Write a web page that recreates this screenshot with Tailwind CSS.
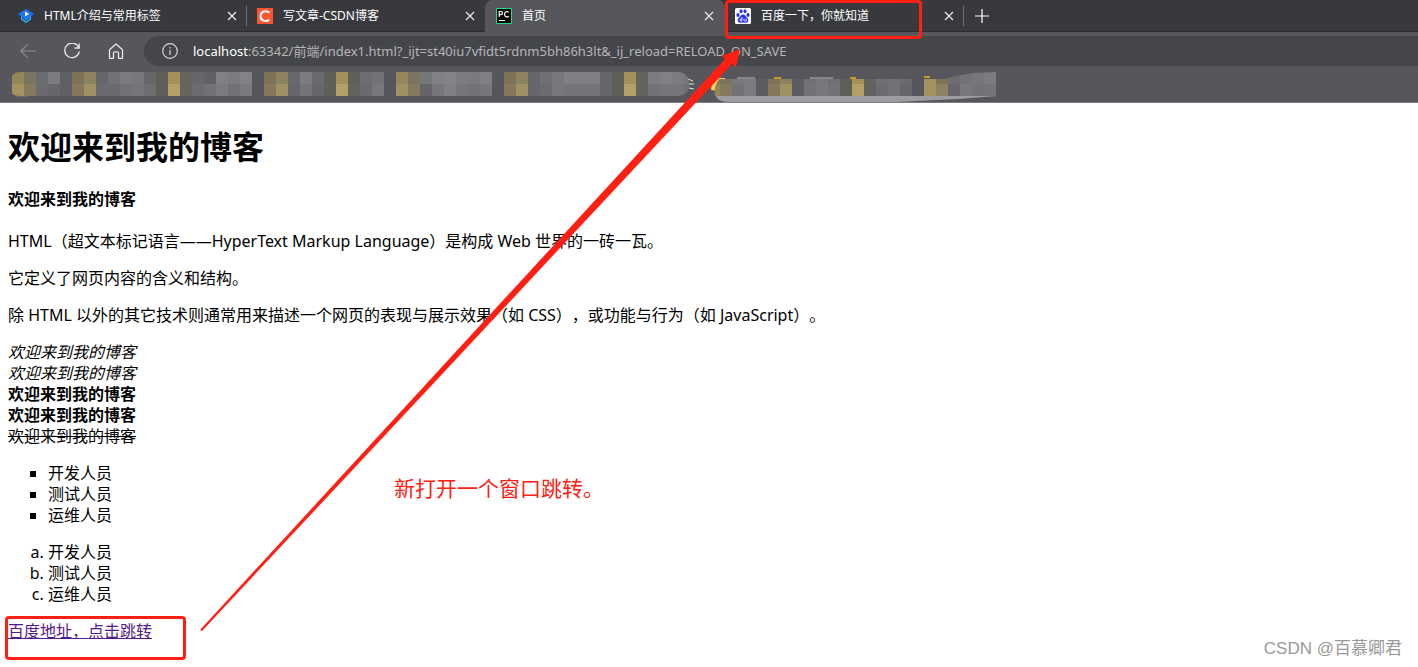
<!DOCTYPE html>
<html lang="zh-CN">
<head>
<meta charset="utf-8">
<title>首页</title>
<script src="https://cdn.jsdelivr.net/npm/@tailwindcss/browser@4"></script>
</head>
<body class="relative min-h-screen overflow-x-hidden bg-white font-['Noto_Sans','Noto_Sans_CJK_SC',sans-serif] text-base leading-[21px] text-black [text-spacing-trim:space-all]">
<header class="bg-[#56575c]">
  <nav aria-label="标签页" class="flex h-8 bg-[#38393d] text-xs text-white">
    <div class="flex w-[247px] items-center border-b border-[#2b2c2f] pr-2 pl-[18px]">
      <svg class="size-4 shrink-0" viewBox="0 0 16 16" aria-hidden="true"><path d="M3 8v3.500L8 15l5-3.500V8z" fill="#36b6ee"/><path d="M8 1l8 5-8 6-8-6z" fill="#1d72f3"/><path d="M7 3.500v5l4-2.500z" fill="#fff"/><path d="M4 10l4 3 4-3" fill="none" stroke="#1b3d61"/></svg>
      <span class="ml-2.5 grow whitespace-nowrap">HTML介绍与常用标签</span>
      <button aria-label="关闭" class="grid size-4 place-items-center"><svg class="size-2.5" viewBox="0 0 10 10"><path d="M1 1l8 8M9 1l-8 8" stroke="#e6e6e7" stroke-width="1.300"/></svg></button>
      <span class="ml-1.5 -mr-2 h-5 w-px bg-[#707175]"></span>
    </div>
    <div class="flex w-[238px] items-center border-b border-[#2b2c2f] pr-[7px] pl-2.5">
      <svg class="size-4 shrink-0" viewBox="0 0 16 16" aria-hidden="true"><path d="M0 0h16v16H0z" fill="#fc5531"/><path d="M12.500 4.500C8 1.500 3.500 4 3.500 8.200c0 4.500 4.800 6 8.700 3.600" fill="none" stroke="#fff" stroke-width="2"/></svg>
      <span class="ml-2.5 grow whitespace-nowrap">写文章-CSDN博客</span>
      <button aria-label="关闭" class="grid size-4 place-items-center"><svg class="size-2.5" viewBox="0 0 10 10"><path d="M1 1l8 8M9 1l-8 8" stroke="#e6e6e7" stroke-width="1.300"/></svg></button>
    </div>
    <div class="flex w-[240px] items-center rounded-t-lg bg-[#56575c] pr-2 pl-[11px]">
      <svg class="size-4 shrink-0" viewBox="0 0 16 16" aria-hidden="true"><path d="M.5.5h15v15H.5z" fill="#000" stroke="#21d789"/><path d="M3.200 9V3.500h1.600q1.700 0 1.700 1.600T4.800 6.700H3.200M12.700 4.300C10.800 2.600 8.500 4 8.500 6.200s2.300 3.600 4.200 2M3 12.500h6" fill="none" stroke="#fff" stroke-width="1.200"/></svg>
      <span class="ml-2.5 grow whitespace-nowrap">首页</span>
      <button aria-label="关闭" class="grid size-4 place-items-center"><svg class="size-2.5" viewBox="0 0 10 10"><path d="M1 1l8 8M9 1l-8 8" stroke="#e6e6e7" stroke-width="1.300"/></svg></button>
    </div>
    <div class="flex w-[239px] items-center border-b border-[#2b2c2f] pr-2 pl-2.5">
      <svg class="size-4 shrink-0" viewBox="0 0 16 16" aria-hidden="true"><rect width="16" height="16" rx="1.500" fill="#fff"/><g fill="#2932e1"><ellipse cx="3" cy="7" rx="1.600" ry="2.100"/><ellipse cx="6" cy="3.300" rx="1.500" ry="2"/><ellipse cx="10" cy="3.300" rx="1.500" ry="2"/><ellipse cx="13" cy="7" rx="1.600" ry="2.100"/><path d="M8 6.500c2.200 0 2.500 2 4.200 3.300 2 1.700 1.200 5-1.200 5-1.200 0-2-.3-3-.3s-1.800.3-3 .3c-2.400 0-3.200-3.300-1.200-5C5.500 8.500 5.800 6.500 8 6.500z"/></g><path d="M7 9v4H5.800Q4.800 13 4.800 12t1-1H7M9 10.500v1.700q0 .8.800.8h1.400v-2.500" fill="none" stroke="#fff" stroke-width=".8"/></svg>
      <span class="ml-2.5 grow whitespace-nowrap">百度一下，你就知道</span>
      <button aria-label="关闭" class="grid size-4 place-items-center"><svg class="size-2.5" viewBox="0 0 10 10"><path d="M1 1l8 8M9 1l-8 8" stroke="#e6e6e7" stroke-width="1.300"/></svg></button>
      <span class="ml-1.5 -mr-2 h-5 w-px bg-[#707175]"></span>
    </div>
    <div class="flex grow items-center border-b border-[#2b2c2f] pl-2.5">
      <button aria-label="新建标签页" class="grid size-4 place-items-center"><svg class="size-3.5" viewBox="0 0 14 14"><path d="M7 0v14M0 7h14" stroke="#fff" stroke-width="1.200"/></svg></button>
    </div>
  </nav>
  <div class="flex h-[38px] items-center">
    <div class="flex w-36 shrink-0 items-center gap-7 pl-5">
      <button aria-label="后退" class="size-4"><svg class="size-4" viewBox="0 0 16 16" fill="none" stroke="#8d8e92" stroke-width="1.200"><path d="M16 8H.8M8 .8L.8 8 8 15.200"/></svg></button>
      <button aria-label="刷新" class="size-4"><svg class="size-4" viewBox="0 0 16 16" fill="none" stroke="#e8e8e9" stroke-width="1.300"><path d="M15 5A7.300 7.300 0 1 0 15.300 8.500M15.200.5V5h-4.700"/></svg></button>
      <button aria-label="主页" class="size-4"><svg class="size-4" viewBox="0 0 16 16" fill="none" stroke="#e8e8e9" stroke-width="1.300" stroke-linejoin="round"><path d="M1.500 6.700L8 .9l6.500 5.800v8.600h-4V9.800q0-1-1-1h-3q-1 0-1 1v5.500h-4z"/></svg></button>
    </div>
    <div class="flex h-[30px] grow items-center rounded-l-full bg-[#45464a] pl-[18px] text-[13px]">
      <svg class="size-4 shrink-0" viewBox="0 0 16 16" fill="none" stroke="#d7d7d9" stroke-width="1.200" aria-hidden="true"><circle cx="8" cy="8" r="7.300"/><path d="M8 7v5M8 4v1.500"/></svg>
      <span class="ml-[15px] whitespace-nowrap text-[#b5b5b8]"><span class="text-white">localhost</span>:63342/前端/index1.html?_ijt=st40iu7vfidt5rdnm5bh86h3lt&amp;_ij_reload=RELOAD_ON_SAVE</span>
    </div>
  </div>
  <div class="h-[33px] border-b border-[#7d7e82]">
    <svg id="bookmarks" class="block h-8 w-[1000px]" viewBox="0 70 1000 32" aria-hidden="true">
      <defs>
        <clipPath id="left"><path d="M12 76q2-4 9-4H677q12 0 12 12t-12 12H21q-9 0-9-4z"/></clipPath>
        <clipPath id="right"><path d="M715 96q-2-8 4-17h226l10-3 18-3 23-1v24z"/></clipPath>
      </defs>
      <path d="M688 79l5 2m-4 3h5m-5 4l5 1" fill="none" stroke="#e5e5e5"/>
      <path d="M711 90q0-9 8-12h6v3q-6 2-7 10z" fill="#f7cf5b"/>
      <path d="M715 94q2 8 13 8h168l62-3 39-3z" fill="#9c9da0"/>
      <path d="M774 78h7M850 78h6M924 77h6" stroke="#c49a20" stroke-width="2"/>
      <path d="M737 78h18M810 78h23" stroke="#b5b6b9"/>
      <path d="M17 96h10" stroke="#85868a"/>
    </svg>
  </div>
</header>

<main class="px-2 pt-[22px] pb-[25px]">
  <h1 class="text-[32px] leading-[43px] font-bold">欢迎来到我的博客</h1>
  <h4 class="my-[21px] font-bold">欢迎来到我的博客</h4>
  <p class="mb-4">HTML（超文本标记语言——HyperText Markup Language）是构成 Web 世界的一砖一瓦。</p>
  <p class="mb-4">它定义了网页内容的含义和结构。</p>
  <p class="mb-4">除 HTML 以外的其它技术则通常用来描述一个网页的表现与展示效果（如 CSS），或功能与行为（如 JavaScript）。</p>
  <div class="h-[21px]"><em>欢迎来到我的博客</em></div>
  <div class="h-[21px]"><i>欢迎来到我的博客</i></div>
  <div class="h-[21px]"><strong>欢迎来到我的博客</strong></div>
  <div class="h-[21px]"><b>欢迎来到我的博客</b></div>
  <div class="h-[21px]"><del>欢迎来到我的博客</del></div>
  <ul class="my-4 list-[square] pl-10">
    <li>开发人员</li>
    <li>测试人员</li>
    <li>运维人员</li>
  </ul>
  <ol class="mb-4 list-[lower-alpha] pl-10">
    <li>开发人员</li>
    <li>测试人员</li>
    <li>运维人员</li>
  </ol>
  <a href="https://www.baidu.com" target="_blank" class="block w-fit text-[#551a8b] underline">百度地址，点击跳转</a>
</main>

<div class="pointer-events-none absolute top-0 left-[725px] h-[39px] w-[197px] rounded-sm border-3 border-[#ff2013]"></div>
<div class="pointer-events-none absolute top-[616px] left-[5px] h-11 w-[181px] rounded-sm border-3 border-[#ff2013]"></div>
<svg class="pointer-events-none absolute top-0 left-0 h-[640px] w-[760px]" viewBox="0 0 760 640" aria-hidden="true"><path d="M200 630L725 59l-3-3 18-7-4 18-4-3L202 631z" fill="#ff2013"/></svg>
<p class="absolute top-[475px] left-[394px] text-[21px] leading-[26px] whitespace-nowrap text-[#ff2013]">新打开一个窗口跳转。</p>
<p class="absolute right-4 bottom-2 font-['Liberation_Sans','Noto_Sans_CJK_SC',sans-serif] text-[17px] leading-5 whitespace-nowrap text-[#999]">CSDN @百慕卿君</p>

<script>
  // Pixelated bookmark blocks: [x, top colour, bottom colour], each 12px square.
  const blocks = {
    left: [[12,'94875a','a3935f'],[24,'7b7460','857a5e'],[36,'6b6c71','6a6b71'],[48,'7b7c80','66676c'],[60,'606166','5f6065'],[72,'7c7455','85795d'],[84,'8d8260','9f9161'],[96,'66676c','6a6b70'],[108,'717276','6a6b70'],[120,'7b7c80','717276'],[132,'77787c','757679'],[144,'65666a','6d6e72'],[156,'5f5f58','605f58'],[168,'a4915a','b3a066'],[180,'65645f','65645f'],[192,'66676c','6b6c71'],[204,'606166','717276'],[216,'808185','7b7c80'],[228,'7b7c80','717276'],[240,'828387','7a7b7f'],[264,'7c7455','85795d'],[276,'8d8260','9f9161'],[288,'68696e','66676c'],[300,'7c7d81','74757a'],[312,'6a6b70','66676c'],[324,'5f5f58','605f58'],[336,'a4915a','b3a066'],[348,'605f5b','62625e'],[360,'6d6e73','6a6b70'],[372,'727377','77787c'],[396,'94875a','9f9161'],[408,'7b7460','857a5e'],[420,'76777b','64656a'],[432,'808185','76777b'],[444,'838488','7f8084'],[456,'7b7c80','76777b'],[468,'7a7b7f','727377'],[480,'7f8084','76777b'],[504,'7c7455','85795d'],[516,'8d8260','9f9161'],[528,'66676c','66676c'],[540,'6f7074','6b6c71'],[552,'77787c','78797d'],[564,'7f8084','74757a'],[576,'7f8084','74757a'],[588,'7f8084','74757a'],[600,'66676c','66676c'],[612,'5f5f58','605f58'],[624,'a4915a','b3a066'],[636,'64645f','64645f'],[648,'7b7c80','727377'],[660,'808185','76777b'],[672,'7b7c80','76777b'],[684,'76777b','707175']],
    right: [[708,'857a5e','94875a'],[720,'7b7460','857a5e'],[732,'77787c','727377'],[744,'7b7c80','7b7c80'],[756,'5c5d62','5c5d62'],[768,'7c7455','85795d'],[780,'8d8260','9f9161'],[792,'5c5d62','5c5d62'],[804,'6f7074','727377'],[816,'77787c','78797d'],[828,'6f7074','727377'],[840,'5f5f58','605f58'],[852,'a4915a','b3a066'],[864,'64645f','62625e'],[876,'6f7074','6b6c71'],[888,'727377','727377'],[900,'6a6b70','66676c'],[912,'56575c','56575c'],[924,'a39360','a3935f'],[936,'7c7455','8d8260'],[948,'6b6c71','66676c'],[960,'727377','78797d'],[972,'76777b','727377'],[984,'7b7c80','74757a']]
  };
  const svg = document.getElementById('bookmarks');
  for (const [side, list] of Object.entries(blocks)) {
    const g = document.createElementNS('http://www.w3.org/2000/svg', 'g');
    g.setAttribute('clip-path', `url(#${side})`);
    g.setAttribute('shape-rendering', 'crispEdges');
    g.innerHTML = list.map(([x, a, b]) => `<rect x="${x}" y="72" width="12" height="12" fill="#${a}"/><rect x="${x}" y="84" width="12" height="12" fill="#${b}"/>`).join('');
    svg.append(g);
  }
</script>
</body>
</html>
